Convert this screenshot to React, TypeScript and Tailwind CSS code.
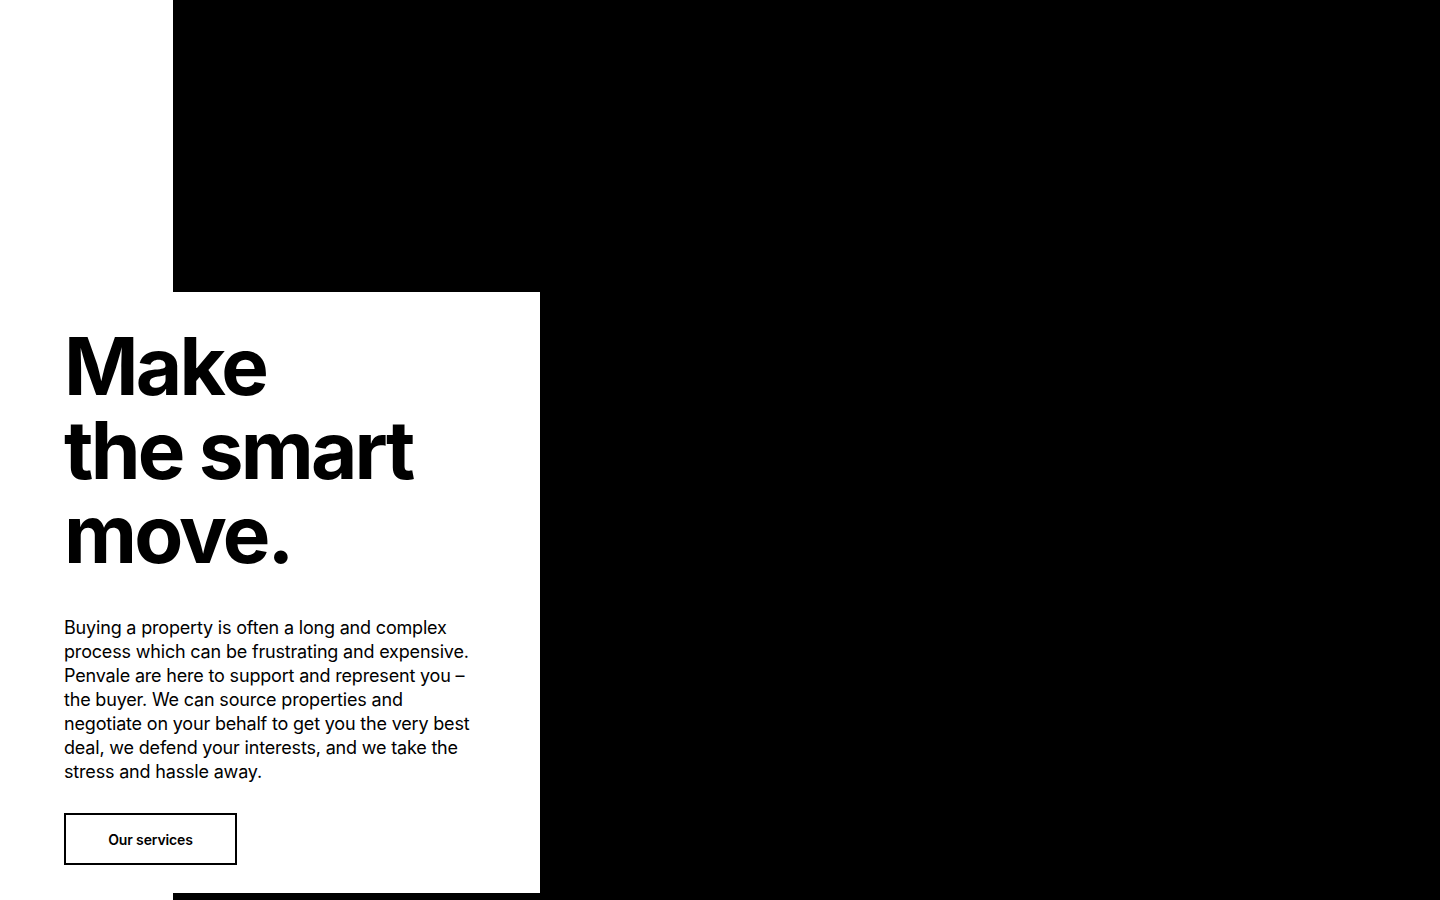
import React from 'react';

const App: React.FC = () => {
  return (
    <div className="relative flex h-[900px] w-full overflow-hidden bg-white font-['Inter',sans-serif] text-black">
      {/* white gutter + black hero panel */}
      <div className="w-[173px] shrink-0 bg-white" />
      <div className="flex-1 bg-black" />

      {/* intro card sits over the panel */}
      <section className="absolute left-0 top-[292px] flex h-[601px] w-[540px] flex-col bg-white pl-16 pt-[32px] pb-[28px]">
        <h1 className="text-[80px] font-bold leading-[84px] tracking-[-0.035em]">
          Make
          <br />
          the smart
          <br />
          move.
        </h1>
        <p className="mt-[40px] w-[440px] text-[18px] leading-[24px] tracking-[-0.01em]">
          Buying a property is often a long and complex
          <br />
          process which can be frustrating and expensive.
          <br />
          Penvale are here to support and represent you –
          <br />
          the buyer. We can source properties and
          <br />
          negotiate on your behalf to get you the very best
          <br />
          deal, we defend your interests, and we take the
          <br />
          stress and hassle away.
        </p>
        <div className="mt-auto">
          <button className="flex h-[52px] w-[173px] items-center justify-center border-2 border-black text-[14px] font-semibold tracking-[-0.01em]">
            Our services
          </button>
        </div>
      </section>
    </div>
  );
};

export default App;
